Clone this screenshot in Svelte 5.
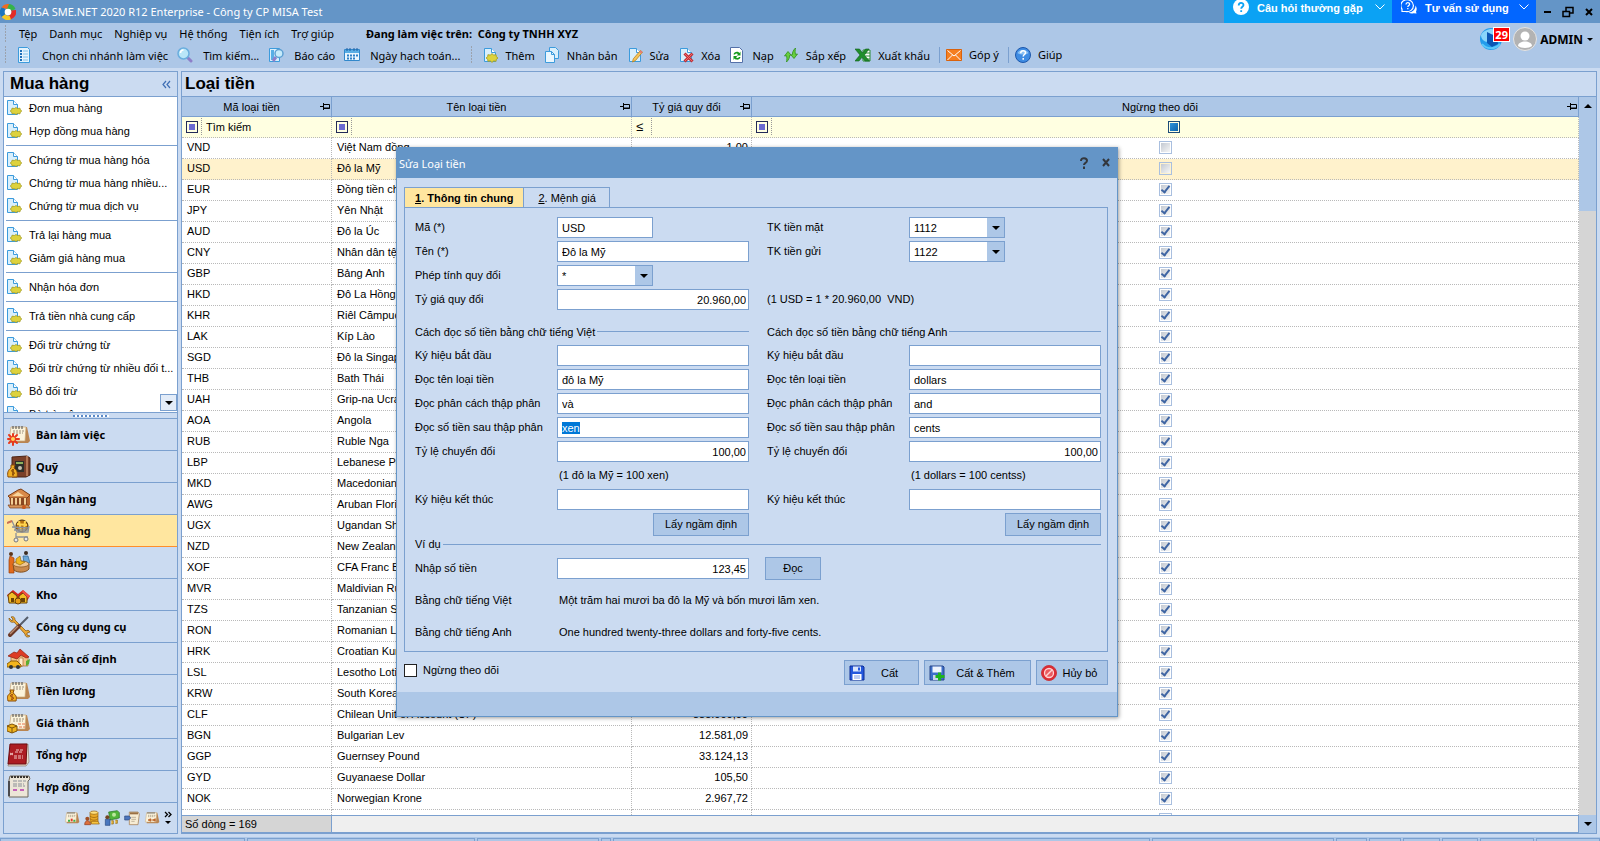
<script>
  import { onMount } from 'svelte';

  const menus = ['Tệp', 'Danh mục', 'Nghiệp vụ', 'Hệ thống', 'Tiện ích', 'Trợ giúp'];

  const mainTools = [
    { icon: 'branch', label: 'Chọn chi nhánh làm việc' },
    { icon: 'search', label: 'Tìm kiếm...' },
    { icon: 'report', label: 'Báo cáo' },
    { icon: 'calendar', label: 'Ngày hạch toán...' }
  ];

  const editTools = [
    { icon: 'add', label: 'Thêm' },
    { icon: 'copy', label: 'Nhân bản' },
    { icon: 'edit', label: 'Sửa' },
    { icon: 'delete', label: 'Xóa' },
    { icon: 'reload', label: 'Nạp' },
    { icon: 'sort', label: 'Sắp xếp' },
    { icon: 'excel', label: 'Xuất khẩu' },
    { icon: 'mail', label: 'Góp ý', sep: true },
    { icon: 'help', label: 'Giúp', sep: true }
  ];

  // Each inner list is a block closed by a separator line
  const tasks = [
    ['Đơn mua hàng', 'Hợp đồng mua hàng'],
    ['Chứng từ mua hàng hóa', 'Chứng từ mua hàng nhiều...', 'Chứng từ mua dịch vụ'],
    ['Trả lại hàng mua', 'Giảm giá hàng mua'],
    ['Nhận hóa đơn'],
    ['Trả tiền nhà cung cấp'],
    ['Đối trừ chứng từ', 'Đối trừ chứng từ nhiều đối t...', 'Bỏ đối trừ', 'Bù trừ công nợ']
  ];

  const modules = [
    { icon: 'desk', label: 'Bàn làm việc' },
    { icon: 'safe', label: 'Quỹ' },
    { icon: 'bank', label: 'Ngân hàng' },
    { icon: 'cart', label: 'Mua hàng' },
    { icon: 'sell', label: 'Bán hàng' },
    { icon: 'store', label: 'Kho' },
    { icon: 'tools', label: 'Công cụ dụng cụ' },
    { icon: 'house', label: 'Tài sản cố định' },
    { icon: 'salary', label: 'Tiền lương' },
    { icon: 'cost', label: 'Giá thành' },
    { icon: 'ledger', label: 'Tổng hợp' },
    { icon: 'contract', label: 'Hợp đồng' }
  ];
  let activeModule = $state('Mua hàng');

  let currencies = $state([
    { code: 'VND', name: 'Việt Nam đồng', rate: '1,00', stopped: false },
    { code: 'USD', name: 'Đô la Mỹ', stopped: false },
    { code: 'EUR', name: 'Đồng tiền chung', stopped: true },
    { code: 'JPY', name: 'Yên Nhật', stopped: true },
    { code: 'AUD', name: 'Đô la Úc', stopped: true },
    { code: 'CNY', name: 'Nhân dân tệ', stopped: true },
    { code: 'GBP', name: 'Bảng Anh', stopped: true },
    { code: 'HKD', name: 'Đô La Hồng Kông', stopped: true },
    { code: 'KHR', name: 'Riêl Cămpuchia', stopped: true },
    { code: 'LAK', name: 'Kíp Lào', stopped: true },
    { code: 'SGD', name: 'Đô la Singapore', stopped: true },
    { code: 'THB', name: 'Bath Thái', stopped: true },
    { code: 'UAH', name: 'Grip-na Ucraina', stopped: true },
    { code: 'AOA', name: 'Angola', stopped: true },
    { code: 'RUB', name: 'Ruble Nga', stopped: true },
    { code: 'LBP', name: 'Lebanese Pound', stopped: true },
    { code: 'MKD', name: 'Macedonian Denar', stopped: true },
    { code: 'AWG', name: 'Aruban Florin', stopped: true },
    { code: 'UGX', name: 'Ugandan Shilling', stopped: true },
    { code: 'NZD', name: 'New Zealand Dollar', stopped: true },
    { code: 'XOF', name: 'CFA Franc BCEAO', stopped: true },
    { code: 'MVR', name: 'Maldivian Rufiyaa', stopped: true },
    { code: 'TZS', name: 'Tanzanian Shilling', stopped: true },
    { code: 'RON', name: 'Romanian Leu', stopped: true },
    { code: 'HRK', name: 'Croatian Kuna', stopped: true },
    { code: 'LSL', name: 'Lesotho Loti', stopped: true },
    { code: 'KRW', name: 'South Korean Won', stopped: true },
    { code: 'CLF', name: 'Chilean Unit of Account (UF)', rate: '885.000,00', stopped: true },
    { code: 'BGN', name: 'Bulgarian Lev', rate: '12.581,09', stopped: true },
    { code: 'GGP', name: 'Guernsey Pound', rate: '33.124,13', stopped: true },
    { code: 'GYD', name: 'Guyanaese Dollar', rate: '105,50', stopped: true },
    { code: 'NOK', name: 'Norwegian Krone', rate: '2.967,72', stopped: true },
    { code: '', name: '', stopped: true }
  ]);
  let selected = $state('USD');

  let readings = $state([
    {
      id: 'vi', title: 'Cách đọc số tiền bằng chữ tiếng Việt', note: '(1 đô la Mỹ = 100 xen)',
      start: '', unit: 'đô la Mỹ', point: 'và', cents: 'xen', ratio: '100,00', end: ''
    },
    {
      id: 'en', title: 'Cách đọc số tiền bằng chữ tiếng Anh', note: '(1 dollars = 100 centss)',
      start: '', unit: 'dollars', point: 'and', cents: 'cents', ratio: '100,00', end: ''
    }
  ]);

  const readingFields = [
    { key: 'start', label: 'Ký hiệu bắt đầu' },
    { key: 'unit', label: 'Đọc tên loại tiền' },
    { key: 'point', label: 'Đọc phân cách thập phân' },
    { key: 'cents', label: 'Đọc số tiền sau thập phân' },
    { key: 'ratio', label: 'Tỷ lệ chuyển đổi', number: true },
    { key: 'end', label: 'Ký hiệu kết thúc' }
  ];

  onMount(() => {
    const field = document.getElementById('vi-cents');
    field.focus();
    field.select();
  });
</script>

{#snippet page()}
  <path d="M2.500 1.500h7l4 4v9h-11z" fill="#d9effc" stroke="#3c9bdc" />
  <path d="M9.500 1.500v4h4" fill="#fff" stroke="#3c9bdc" />
{/snippet}

{#snippet icon(name)}
  <svg class="icon" viewBox="0 0 16 16" aria-hidden="true">
    {#if name === 'branch'}
      <path d="M2.500 .5h9l2 2v13h-11z" fill="#e4f3fd" stroke="#3c9bdc" />
      <path d="M4 4h2M4 7h2M4 10h2M4 13h2" stroke="#1d6fb8" stroke-width="2" />
      <path d="M7 4h5M7 7h5M7 10h5M7 13h5" stroke="#7cc0ea" />
    {:else if name === 'search'}
      <path d="M10 10l4 4" stroke="#8d7fc9" stroke-width="3" stroke-linecap="round" />
      <circle cx="6.500" cy="6.500" r="5.500" fill="#b9e6f8" stroke="#6aaede" stroke-width="1.500" />
      <path d="M3.500 6a3 3 0 0 1 3-3" fill="none" stroke="#fff" stroke-width="1.500" />
    {:else if name === 'report'}
      <path d="M1.500 1.500h10v13h-10z" fill="#d9effc" stroke="#3c9bdc" />
      <path d="M3 3h3v10H3z" fill="#58aee5" />
      <path d="M8 10l-3 4" stroke="#8d7fc9" stroke-width="3" />
      <circle cx="11" cy="6.500" r="4" fill="#c6ebfa" stroke="#5d9fd2" stroke-width="1.500" />
    {:else if name === 'calendar'}
      <path d="M.5 2.500h15v11H.5z" fill="#e9f6fe" stroke="#3288cb" />
      <path d="M1 3h14v3H1z" fill="#58aee5" />
      <path d="M3 1v3M6 1v3M10 1v3M13 1v3" stroke="#1d5fa3" />
      <path d="M3 8.500h11M3 11.500h9" stroke="#2d80c7" stroke-width="2" stroke-dasharray="2 1" />
    {:else if name === 'add'}
      {@render page()}
      <path d="M10 6.500l1.500 1.600 2.600-.4.200 2 1.700 1.300-1.700 1.300-.200 2-2.600-.4L10 15.500l-1.500-1.600-2.600.4-.2-2L4 11l1.700-1.300.2-2 2.600.4z" fill="#ddd23c" stroke="#a39a1e" stroke-width=".8" />
    {:else if name === 'task'}
      <path d="M1.500 .5h6l4 4v10h-10z" fill="#d9effc" stroke="#3c9bdc" />
      <path d="M7.500 .5v4h4" fill="#fff" stroke="#3c9bdc" />
      <path d="M10 7.500l1.500 1 2.500-.3.300 1.600 1.500 1.200-1.500 1.200-.3 1.600-2.500-.3-1.500 1-1.500-1-2.500.3-.3-1.600L4.200 11l1.500-1.200.3-1.600 2.500.3z" fill="#ddd23c" stroke="#a39a1e" stroke-width=".8" />
    {:else if name === 'copy'}
      <path d="M5.500 .5h6l3 3v8h-9z" fill="#d9effc" stroke="#3c9bdc" />
      <path d="M1.500 4.500h6l3 3v8h-9z" fill="#e9f6fe" stroke="#3c9bdc" />
      <path d="M7.500 4.500v3h3" fill="none" stroke="#3c9bdc" />
    {:else if name === 'edit'}
      {@render page()}
      <path d="M13.500 3.500l2 1.600-7 8.400-3 1.500.800-3.200z" fill="#f7c557" stroke="#b9811f" stroke-width=".8" />
      <path d="M13.500 3.500l2 1.600-1.200 1.400-2-1.600z" fill="#e8767a" />
    {:else if name === 'delete'}
      {@render page()}
      <path d="M6.500 6.500l8 8M14.500 6.500l-8 8" stroke="#c22f35" stroke-width="3" />
      <path d="M7 7l7 7M14 7l-7 7" stroke="#ec6a6c" />
    {:else if name === 'reload'}
      <path d="M1.500 .5h9l3 3v12h-12z" fill="#fff" stroke="#5470a8" />
      <path d="M4.500 7.500c.5-3 4.500-3.500 6-1.500l1-1.500v4h-4l1.500-1.300c-1-1-2.500-.7-3 .3z" fill="#149a1c" />
      <path d="M11.500 10c-.5 3-4.500 3.500-6 1.500l-1 1.500V9h4L7 10.300c1 1 2.500.7 3-.3z" fill="#149a1c" />
    {:else if name === 'sort'}
      <path d="M1.500 9L5 4.500 8 8l-1.500.5c.2 2-.5 4-3 6.500.5-2.500.5-4.500 0-6.300z" fill="#67cf3e" stroke="#2e8f19" stroke-width=".8" />
      <path d="M14.500 7L11 11.500 8 8l1.500-.5c-.2-2 .5-4 3-6.500-.5 2.500-.5 4.500 0 6.300z" fill="#67cf3e" stroke="#2e8f19" stroke-width=".8" />
    {:else if name === 'excel'}
      <path d="M8 3h7v11H8z" fill="#fff" stroke="#2b8c35" />
      <path d="M9 6h6M9 9h6M9 12h6" stroke="#2b8c35" />
      <path d="M0 2h4.500l3 4 3-4H14L9.300 8.200 14.500 14H10l-3-3.700L4 14H0l5-6z" fill="#1f8f2c" stroke="#0f5c19" stroke-width=".6" />
    {:else if name === 'mail'}
      <path d="M.5 2.500h15v11H.5z" fill="#f57f20" stroke="#d9620d" />
      <path d="M1.500 3.500L8 9l6.500-5.500M1.500 13l5-5M14.500 13l-5-5" fill="none" stroke="#fff" />
    {:else if name === 'help'}
      <circle cx="8" cy="8" r="7.500" fill="#3f8ce3" stroke="#1c57ab" />
      <path d="M2.500 6a6 5 0 0 1 11 0c-3 2-8 2-11 0z" fill="#8cc2f5" />
      <path d="M5.700 6.200c0-3.400 4.800-3.200 4.800-.5 0 1.800-2.300 1.800-2.300 3.800M8.200 11v1.800" fill="none" stroke="#fff" stroke-width="1.500" />
    {:else if name === 'save'}
      <path d="M1 1h13l1 1v13H1z" fill="#2458dc" stroke="#0c2d96" />
      <path d="M4 1.500h8v5H4z" fill="#dbe6fb" />
      <path d="M9 2.500h2v3H9z" fill="#2458dc" />
      <path d="M3.500 9h9v6h-9z" fill="#fff" />
      <path d="M5 11h6M5 13h6" stroke="#7d9be6" />
    {:else if name === 'saveadd'}
      <path d="M1 1h13l1 1v13H1z" fill="#3c6fc9" stroke="#29478a" />
      <path d="M3.500 1.500h9v6h-9z" fill="#eef4fd" />
      <path d="M4 10h8v5H4z" fill="#c9d5ea" />
      <path d="M10.500 7.500v8M6.500 11.500h9" stroke="#1eb31e" stroke-width="3" />
    {:else if name === 'cancel'}
      <circle cx="8" cy="8" r="7.500" fill="#dc2a32" stroke="#c93a40" />
      <circle cx="8" cy="8" r="4.500" fill="#ea5a5f" stroke="#ffd4d4" stroke-width="1.300" />
      <path d="M5 11l6-6" stroke="#ffd4d4" stroke-width="1.500" />
    {/if}
  </svg>
{/snippet}

{#snippet board()}
  <path d="M5 4h15l3 14-2 2H4z" fill="#b98552" />
  <path d="M4 4h15l-1 14H2z" fill="#fbf3dc" stroke="#c9a877" stroke-width=".7" />
  <path d="M6 3v3M9 3v3M12 3v3M15 3v3" stroke="#444" />
  <path d="M6 8h11M6 10h10" stroke="#9a8d78" stroke-dasharray="2 1" />
{/snippet}

{#snippet moduleIcon(name)}
  <svg class="module-icon" viewBox="0 0 24 24" aria-hidden="true">
    {#if name === 'desk'}
      {@render board()}
      <path d="M6 11v11M1 16h11M2 12l8 8M10 12l-8 8" stroke="#e8391c" stroke-width="2" stroke-linecap="round" />
      <circle cx="6" cy="16" r="2" fill="#ffd45c" />
    {:else if name === 'safe'}
      <path d="M5 2l15-1 3 2v17l-4 2H5z" fill="#7b4029" stroke="#4c2415" />
      <path d="M20 1v20" stroke="#b47754" stroke-width="2" />
      <path d="M8 6h9v11H8z" fill="#2d2f2a" />
      <path d="M9 8h7" stroke="#8db05d" stroke-width="2" />
      <circle cx="13" cy="13" r="2" fill="#c7c1b0" />
      <path d="M4 10h4l-1 3c3 2 4 5 3 9H1c-1-4 0-7 3-9z" fill="#f0ae25" stroke="#8a4c0b" />
      <path d="M7 15c-3-1-3 2-1 2s2 3-1 2M6 14v7" fill="none" stroke="#7a3c05" />
    {:else if name === 'bank'}
      <path d="M2 9L13 2l10 6v10l-6 4L3 17z" fill="#b5642f" />
      <path d="M1 9L11 3l3-1 9 6-3 3H3z" fill="#d98a4a" stroke="#7d3f17" />
      <path d="M5 9l6-4 6 4z" fill="#f8d59c" />
      <path d="M3 11h17v8H3z" fill="#8a4721" />
      <path d="M5 11v8M9 11v8M13 11v8M18 11v8" stroke="#f3cf95" stroke-width="2" />
      <path d="M1 18h20l2 3H3z" fill="#d9955a" stroke="#7d3f17" stroke-width=".7" />
      <circle cx="17" cy="20" r="2" fill="#c95b1f" />
    {:else if name === 'cart'}
      <circle cx="15" cy="7" r="6" fill="#b87312" stroke="#4c3210" />
      <path d="M10 5l10 1M12 2l2 10M18 2l-1 10" stroke="#ffd44e" stroke-width="2" />
      <path d="M0 4l5-2 5 11h11l1-6M5 8l17 1M7 11h14M9 14v4h12M12 9v4M17 9v4" fill="none" stroke="#8d929b" stroke-width="1.300" />
      <path d="M0 4l5-2" stroke="#cb6f53" stroke-width="2" />
      <circle cx="9" cy="21" r="2" fill="#e8e8ea" stroke="#777" />
      <circle cx="19" cy="20" r="2" fill="#e8e8ea" stroke="#777" />
    {:else if name === 'sell'}
      <circle cx="4" cy="3" r="2" fill="#5d3518" />
      <path d="M3 5l4 2v15H2V9z" fill="#e26b1c" stroke="#9a3f0c" stroke-width=".7" />
      <circle cx="19" cy="2" r="2" fill="#3c2c22" />
      <path d="M16 5l5 0 2 7h-6z" fill="#6aa6d8" stroke="#2f638f" stroke-width=".7" />
      <path d="M6 13h16v5c-3 4-12 4-15 1z" fill="#c98a4d" stroke="#82501f" />
      <ellipse cx="14" cy="13" rx="8" ry="3" fill="#efc793" stroke="#82501f" stroke-width=".7" />
      <path d="M9 8l4-3 1 5 4 1-5 3-4-2z" fill="#f0b71c" stroke="#8c6208" stroke-width=".6" />
    {:else if name === 'store'}
      <path d="M0 12l6-5 5 4 5-4 7 6-3 5H3z" fill="#d2261c" />
      <path d="M1 12l4-3 5 4v7H2zM12 13l4-3 4 4v6h-8z" fill="#f3bd27" stroke="#6b4307" />
      <path d="M16 7l7 6-2 2-6-6z" fill="#ee5148" />
      <path d="M4 15h3v4H4zM14 15h4v4h-4z" fill="#6b4307" />
      <circle cx="11" cy="18" r="3" fill="#e79c16" stroke="#6b4307" />
    {:else if name === 'tools'}
      <path d="M2 3c0 4 3 5 5 4l11 12c0 3 3 4 5 2l-3-1v-2l3-1c-1-2-3-2-4-1L8 5c0-3-2-4-4-3l2 2-1 2z" fill="#eba631" stroke="#7d5210" stroke-width=".7" />
      <path d="M21 2l-9 9" stroke="#555d6b" stroke-width="2" />
      <path d="M12 11l-9 9" stroke="#6b3827" stroke-width="4" stroke-linecap="round" />
      <path d="M11 11l-8 8" stroke="#b98c72" stroke-width="1.500" />
    {:else if name === 'house'}
      <path d="M4 9h17v10H4z" fill="#f2c289" stroke="#ac6a32" stroke-width=".7" />
      <path d="M1 9l6-4 3 1 3-4 9 8-3 1-5-3-4 4z" fill="#dd3b24" stroke="#8f1f10" stroke-width=".7" />
      <path d="M12 11h4v8h-4z" fill="#fff0cf" stroke="#ac6a32" stroke-width=".7" />
      <path d="M0 17l4-3h6l4 4v2H0z" fill="#f3b51e" stroke="#8c5e08" />
      <circle cx="4" cy="20" r="2" fill="#333" /><circle cx="11" cy="20" r="2" fill="#333" />
      <path d="M19 14l4-2-1 5-3 2z" fill="#5aae32" />
    {:else if name === 'salary'}
      {@render board()}
      <path d="M3 11h4l-1 3c3 2 4 4 3 8H1c-1-4-1-6 3-8z" fill="#f0ae25" stroke="#8a4c0b" />
      <path d="M6 16c-3-1-3 2-1 2s2 3-1 2" fill="none" stroke="#7a1c05" />
    {:else if name === 'cost'}
      {@render board()}
      <path d="M11 13h7M12 16h6" stroke="#e8744f" stroke-dasharray="3 1" />
      <path d="M0 15l5-2 5 2v5l-5 2-5-2z" fill="#f0b31d" stroke="#80540a" />
      <path d="M0 15l5 2 5-2M5 17v5" fill="none" stroke="#80540a" />
    {:else if name === 'ledger'}
      <path d="M4 2l17-1 1 18-3 4H1z" fill="#e8ddcb" stroke="#8b7a6d" stroke-width=".7" />
      <path d="M3 1h17l-1 20H1z" fill="#ac1c22" stroke="#6d0d12" />
      <path d="M9 7h8M8 9h8M7 13h9M7 15h9" stroke="#f1c9c4" stroke-dasharray="3 1" />
      <path d="M3 10l3 2M6 10l-3 2" stroke="#f1c9c4" />
    {:else if name === 'contract'}
      <path d="M3 1h19l1 3-2 2v16H2V5z" fill="#ece5d7" stroke="#6f665a" />
      <path d="M4 2h17" stroke="#39342e" stroke-width="2" stroke-dasharray="2 1" />
      <path d="M6 6h13M6 9h11M6 11h12" stroke="#8b9098" stroke-dasharray="4 1" />
      <path d="M6 15h4M13 15h4" stroke="#c45fb8" stroke-width="2" />
      <path d="M2 6v15" stroke="#4b4a4e" stroke-width="2" />
    {:else if name === 'chart'}
      {@render board()}
      <path d="M6 16h3M14 16h3" stroke="#3bb14a" stroke-width="3" />
      <path d="M10 15h3" stroke="#e03a2e" stroke-width="4" />
    {:else if name === 'coins'}
      <path d="M9 4v14c3 3 9 3 12 0V4z" fill="#e9a928" stroke="#935f0c" />
      <ellipse cx="15" cy="4" rx="6" ry="2.500" fill="#ffe07d" stroke="#935f0c" />
      <path d="M9 9c3 3 9 3 12 0M9 13c3 3 9 3 12 0" fill="none" stroke="#935f0c" />
      <circle cx="5" cy="13" r="3" fill="#a24f25" />
      <path d="M1 22c0-8 8-8 9 0z" fill="#dd6f3d" stroke="#8c3718" />
      <path d="M11 17h10l2 4H11z" fill="#f6c441" stroke="#935f0c" />
    {:else if name === 'money'}
      <path d="M7 3l13-2 3 3v8l-14 3z" fill="#52b43a" stroke="#1f701a" />
      <circle cx="15" cy="7" r="3" fill="#bbe89d" />
      <circle cx="5" cy="11" r="3" fill="#744522" />
      <path d="M2 14h7v9H2z" fill="#4977be" stroke="#294a80" />
      <path d="M11 16h3v5h-3M17 15h3v5h-3" fill="#e9b63a" stroke="#8a6310" />
    {:else if name === 'form'}
      <path d="M8 3h13l2 3-2 16H8z" fill="#f7ecd4" stroke="#9a6f42" />
      <path d="M9 5h12" stroke="#9a6f42" stroke-width="3" />
      <path d="M11 11h7M11 14h7M11 17h5" stroke="#a79980" />
      <path d="M1 9h7l2 3-3 3H1z" fill="#4c75bd" stroke="#2d477a" />
    {:else if name === 'budget'}
      {@render board()}
      <path d="M6 15l4-2v4zM17 13v4l-4-2zM9 15h5" fill="#b85c20" stroke="#b85c20" />
    {/if}
  </svg>
{/snippet}

{#snippet pin()}
  <svg class="pin" viewBox="0 0 10 9" aria-hidden="true">
    <path d="M0 4.500h4M3.500 1v7M4 2.500h5.500v4H4" fill="none" stroke="#000" />
    <path d="M4 6h6" stroke="#000" />
  </svg>
{/snippet}

<div class="app">
  <header class="titlebar">
    <svg class="logo" viewBox="0 0 16 16" aria-hidden="true">
      <path d="M8 0a8 8 0 0 1 7.500 5L11 7a3.500 3.500 0 0 0-5-1.500z" fill="#35b34a" />
      <path d="M16 6a8 8 0 0 1-6 9.700L8.500 11.400A3.500 3.500 0 0 0 11 6.500z" fill="#e22d27" />
      <path d="M11 15.500A8 8 0 0 1 1 12l4-2.500a3.500 3.500 0 0 0 4.500 2z" fill="#f5c927" />
      <path d="M1.500 13A8 8 0 0 1 2 3l4 2.500A3.500 3.500 0 0 0 5.500 10z" fill="#1c74bf" />
      <path d="M1.500 3.500A8 8 0 0 1 9 0L7 5z" fill="#f06a22" />
      <circle cx="8" cy="8" r="3.300" fill="#fff" />
    </svg>
    <span class="app-name">MISA SME.NET 2020 R12 Enterprise - Công ty CP MISA Test</span>
    <button class="support faq">
      <svg class="support-icon" viewBox="0 0 16 16" aria-hidden="true">
        <circle cx="8" cy="7" r="8" fill="#fff" />
        <path d="M5.700 5.500c0-3.400 4.800-3.200 4.800-.5 0 1.800-2.300 1.800-2.300 3.800M8.200 10.200V12" fill="none" stroke="#0ba2f4" stroke-width="1.800" />
      </svg>
      <span>Câu hỏi thường gặp</span>
      <svg class="chevron" viewBox="0 0 10 6" aria-hidden="true"><path d="M.5 .5L5 5l4.500-4.500" fill="none" stroke="#fff" /></svg>
    </button>
    <button class="support advice">
      <svg class="support-icon" viewBox="0 0 16 16" aria-hidden="true">
        <path d="M1 11.500V9.200A6.300 6 0 1 1 4.500 11.500z" fill="none" stroke="#fff" stroke-width="1.200" />
        <path d="M5 4.500c0-2.600 3.600-2.400 3.600-.3 0 1.400-1.800 1.400-1.800 2.800M6.800 8v1.300" fill="none" stroke="#fff" stroke-width="1.300" />
        <path d="M14.500 5.500c2 3 1 5 .5 6l.5 2-3-.3c-1.500.5-3.500.3-5-.7 4 0 7-3 7-7z" fill="#fff" />
      </svg>
      <span>Tư vấn sử dụng</span>
      <svg class="chevron" viewBox="0 0 10 6" aria-hidden="true"><path d="M.5 .5L5 5l4.500-4.500" fill="none" stroke="#fff" /></svg>
    </button>
    <div class="window-buttons">
      <button aria-label="Thu nhỏ"><svg viewBox="0 0 12 12"><path d="M3 6h7" stroke="#000" stroke-width="2" /></svg></button>
      <button aria-label="Khôi phục"><svg viewBox="0 0 12 12"><path d="M4 5V1.500h7V7H8M1 5.500h6.500v5H1z" fill="none" stroke="#000" stroke-width="1.500" /></svg></button>
      <button aria-label="Đóng"><svg viewBox="0 0 12 12"><path d="M3 3l6 6M9 3L3 9" stroke="#000" stroke-width="2" /></svg></button>
    </div>
  </header>

  <div class="commands">
    <div class="bars">
      <nav class="menubar">
        <span class="grip"></span>
        {#each menus as menu}
          <button>{menu}</button>
        {/each}
        <strong>Đang làm việc trên:&nbsp; Công ty TNHH XYZ</strong>
      </nav>
      <div class="toolbar">
        <span class="grip"></span>
        {#each mainTools as tool}
          <button class="main">{@render icon(tool.icon)}{tool.label}</button>
        {/each}
        <span class="grip"></span>
        {#each editTools as tool}
          <button class:sep={tool.sep}>{@render icon(tool.icon)}{tool.label}</button>
        {/each}
      </div>
    </div>
    <div class="account">
      <span class="notice">
        <svg viewBox="0 0 24 24" aria-hidden="true">
          <circle cx="12" cy="12" r="11" fill="#239cec" />
          <path d="M2 8c3-6 14-9 19-2-6 0-12 2-12 9-4 0-7-3-7-7z" fill="#8ad6fb" />
          <path d="M8 5l10 5 1 7-6 3-5-4z" fill="#0c57b5" />
          <path d="M3 17c4 5 13 6 18 0" fill="none" stroke="#5cc8fa" stroke-width="2" />
        </svg>
        <span class="badge">29</span>
      </span>
      <svg class="avatar" viewBox="0 0 24 24" aria-hidden="true">
        <circle cx="12" cy="12" r="11.500" fill="#b3b3b3" stroke="#e4e4e4" />
        <circle cx="12" cy="9" r="4.500" fill="#fff" />
        <path d="M5 19c0-6 14-6 14 0-3 2.500-11 2.500-14 0z" fill="#fff" />
      </svg>
      <button class="user">ADMIN <span class="down"></span></button>
    </div>
  </div>

  <div class="workspace">
    <aside class="sidebar">
      <h2>Mua hàng
        <svg viewBox="0 0 9 9" aria-hidden="true"><path d="M4 1L1 4.500 4 8M8 1L5 4.500 8 8" fill="none" stroke="#3f6fb5" stroke-width="1.200" /></svg>
      </h2>
      <div class="tasks">
        {#each tasks as group}
          <ul>
            {#each group as task}
              <li><a href="#task">{@render icon('task')}{task}</a></li>
            {/each}
          </ul>
        {/each}
        <button class="scroll-down" aria-label="Xem thêm"><span class="down"></span></button>
      </div>
      <div class="splitter"></div>
      <nav class="modules">
        {#each modules as module}
          <button class:active={activeModule === module.label} onclick={() => (activeModule = module.label)}>
            {@render moduleIcon(module.icon)}{module.label}
          </button>
        {/each}
      </nav>
      <div class="shortcuts">
        {#each ['chart', 'coins', 'money', 'form', 'budget'] as name}
          {@render moduleIcon(name)}
        {/each}
        <svg class="more" viewBox="0 0 8 14" aria-hidden="true">
          <path d="M1 1l2.500 2.500L1 6M4.500 1L7 3.500 4.500 6" fill="none" stroke="#000" stroke-width="1.300" />
          <path d="M1 10h6l-3 3z" />
        </svg>
      </div>
    </aside>

    <main class="content">
      <h1>Loại tiền</h1>
      <div class="grid-area">
        <div class="grid">
          <div class="rows">
            <table>
              <colgroup>
                <col class="c-code" /><col class="c-name" /><col class="c-rate" /><col />
              </colgroup>
              <thead>
                <tr>
                  {#each ['Mã loại tiền', 'Tên loại tiền', 'Tỷ giá quy đổi', 'Ngừng theo dõi'] as title}
                    <th><span>{title}</span>{@render pin()}</th>
                  {/each}
                </tr>
                <tr class="filter">
                  <td>
                    <div><span class="op"><i></i></span><input aria-label="Lọc mã" placeholder="Tìm kiếm" /></div>
                  </td>
                  <td>
                    <div><span class="op"><i></i></span><input aria-label="Lọc tên" /></div>
                  </td>
                  <td>
                    <div><span class="op">≤</span><input aria-label="Lọc tỷ giá" /></div>
                  </td>
                  <td>
                    <div><span class="op"><i></i></span><input class="tri" type="checkbox" aria-label="Lọc ngừng theo dõi" /></div>
                  </td>
                </tr>
              </thead>
              <tbody>
                {#each currencies as item}
                  <tr class:selected={item.code === selected} onclick={() => (selected = item.code)}>
                    <td>{item.code}</td>
                    <td>{item.name}</td>
                    <td class="number">{item.rate ?? ''}</td>
                    <td class="check"><input type="checkbox" bind:checked={item.stopped} aria-label="Ngừng theo dõi {item.code}" /></td>
                  </tr>
                {/each}
              </tbody>
            </table>
          </div>
          <footer><span>Số dòng = 169</span></footer>
        </div>
        <div class="scrollbar">
          <button aria-label="Cuộn lên"><span class="up"></span></button>
          <div class="thumb"></div>
          <div class="track"></div>
          <button aria-label="Cuộn xuống"><span class="down"></span></button>
        </div>
      </div>
    </main>
  </div>

  <div class="statusbar">
    <span></span><span></span><span></span><span></span><span></span><span></span>
    <span></span><span></span><span></span><span></span><span></span><span></span>
  </div>

  <div class="dialog" role="dialog" aria-labelledby="dialog-title">
    <div class="dialog-title">
      <span id="dialog-title">Sửa Loại tiền</span>
      <button aria-label="Trợ giúp"><svg viewBox="0 0 12 12"><path d="M3 4c0-4 6-3.500 6-.3C9 6 6 5.800 6 8M6 9.500V12" fill="none" stroke="#33373d" stroke-width="2" /></svg></button>
      <button aria-label="Đóng"><svg viewBox="0 0 12 12"><path d="M3 2l6 7M9 2L3 9" stroke="#33373d" stroke-width="2" /></svg></button>
    </div>

    <form class="dialog-body" onsubmit={(e) => e.preventDefault()}>
      <div class="tabs" role="tablist">
        <button type="button" role="tab" aria-selected="true" class="active"><u>1</u>. Thông tin chung</button>
        <button type="button" role="tab" aria-selected="false"><u>2</u>. Mệnh giá</button>
      </div>

      <div class="panel">
        <div class="columns">
          <div class="fields">
            <label for="code">Mã (*)</label>
            <input id="code" class="short" value="USD" />
            <label for="name">Tên (*)</label>
            <input id="name" value="Đô la Mỹ" />
            <label for="operator">Phép tính quy đổi</label>
            <div class="combo"><select id="operator"><option>*</option></select><span class="arrow"><span class="down"></span></span></div>
            <label for="rate">Tỷ giá quy đổi</label>
            <input id="rate" class="number" value="20.960,00" />
          </div>
          <div class="fields">
            <label for="cash">TK tiền mặt</label>
            <div class="combo"><select id="cash"><option>1112</option></select><span class="arrow"><span class="down"></span></span></div>
            <label for="deposit">TK tiền gửi</label>
            <div class="combo"><select id="deposit"><option>1122</option></select><span class="arrow"><span class="down"></span></span></div>
            <span class="blank"></span>
            <span class="wide">(1 USD = 1 * 20.960,00&nbsp; VND)</span>
          </div>
        </div>

        <div class="columns reading">
          {#each readings as reading}
            <div class="fields">
              <div class="legend">{reading.title}</div>
              {#each readingFields as field}
                <label for="{reading.id}-{field.key}">{field.label}</label>
                <input id="{reading.id}-{field.key}" class:number={field.number} bind:value={reading[field.key]} />
                {#if field.number}
                  <span class="note">{reading.note}</span>
                {/if}
              {/each}
              <button type="button" class="default">Lấy ngầm định</button>
            </div>
          {/each}
        </div>

        <div class="fields example">
          <div class="legend">Ví dụ</div>
          <label for="amount">Nhập số tiền</label>
          <input id="amount" class="number" value="123,45" />
          <button type="button" class="read">Đọc</button>
        </div>
        <dl>
          <dt>Bằng chữ tiếng Việt</dt>
          <dd>Một trăm hai mươi ba đô la Mỹ và bốn mươi lăm xen.</dd>
          <dt>Bằng chữ tiếng Anh</dt>
          <dd>One hundred twenty-three dollars and forty-five cents.</dd>
        </dl>
      </div>

      <div class="actions">
        <label class="stop"><input type="checkbox" /> Ngừng theo dõi</label>
        <button class="save">{@render icon('save')}<span>Cất</span></button>
        <button type="button" class="save-add">{@render icon('saveadd')}<span>Cất &amp; Thêm</span></button>
        <button type="button" class="cancel">{@render icon('cancel')}<span>Hủy bỏ</span></button>
      </div>
    </form>
    <div class="dialog-foot"></div>
  </div>
</div>

<style>
  :global(body) {
    overflow: hidden;
  }
  .app {
    --title: #6495c7;
    --bar: #adc7e7;
    --light: #cbdbf1;
    --line: #7ba0cf;
    position: relative;
    display: flex;
    flex-direction: column;
    height: 100vh;
    background: var(--light);
    color: #000;
    font-family: "Liberation Sans", Arial, sans-serif;
    font-size: 11px;
  }
  .app *, .app *::before, .app *::after {
    box-sizing: border-box;
  }
  button {
    padding: 0;
    border: 0;
    background: none;
    color: inherit;
    font: inherit;
    white-space: nowrap;
  }
  input, select {
    margin: 0;
    color: inherit;
    font: inherit;
  }
  .icon {
    width: 16px;
    height: 16px;
    flex: none;
  }
  .down, .up {
    width: 0;
    height: 0;
    border: 4px solid transparent;
    border-bottom-width: 0;
    border-top-color: #000;
  }
  .up {
    border-width: 0 4px 4px;
    border-bottom-color: #000;
  }

  /* Title bar */
  .titlebar {
    display: flex;
    align-items: center;
    height: 23px;
    flex: none;
    background: var(--title);
    color: #fff;
    font-family: "Noto Sans", "Open Sans", sans-serif;
  }
  .logo {
    width: 16px;
    height: 16px;
  }
  .app-name {
    flex: 1;
    padding-left: 6px;
  }
  .support {
    display: flex;
    align-items: flex-start;
    gap: 8px;
    height: 23px;
    padding: 0 7px 0 9px;
    font-family: "Liberation Sans", Arial, sans-serif;
    font-weight: bold;
    line-height: 16px;
  }
  .support span {
    flex: 1;
    text-align: left;
  }
  .faq {
    width: 168px;
    background: #0ba2f4;
  }
  .advice {
    width: 144px;
    background: #0266ff;
  }
  .support-icon {
    width: 16px;
    height: 16px;
  }
  .chevron {
    width: 10px;
    height: 6px;
    margin-top: 4px;
  }
  .window-buttons {
    display: flex;
    justify-content: space-between;
    width: 64px;
    padding: 0 5px;
  }
  .window-buttons svg {
    display: block;
    width: 12px;
    height: 12px;
  }

  /* Menu and toolbar */
  .commands {
    display: flex;
    justify-content: space-between;
    height: 45px;
    flex: none;
    background: var(--bar);
    font-family: "Noto Sans", "Open Sans", sans-serif;
  }
  .menubar, .toolbar {
    display: flex;
    align-items: center;
    height: 21px;
    padding-left: 3px;
  }
  .menubar {
    gap: 12px;
  }
  .menubar strong {
    margin-left: 20px;
  }
  .toolbar {
    gap: 9px;
    height: 22px;
  }
  .toolbar button {
    display: flex;
    align-items: center;
    gap: 7px;
  }
  .toolbar .main {
    gap: 10px;
  }
  .toolbar .sep {
    padding-left: 6px;
    border-left: 1px solid var(--line);
    line-height: 14px;
  }
  .grip {
    width: 4px;
    height: 18px;
    background: conic-gradient(from 90deg at 2px 2px, transparent 75%, #9ba2ad 0) 0 0 / 3px 3px;
  }
  .account {
    display: flex;
    align-items: flex-start;
    gap: 3px;
    padding: 4px 7px 0 0;
  }
  .notice {
    position: relative;
    width: 31px;
    height: 24px;
  }
  .notice svg, .avatar {
    width: 24px;
    height: 24px;
  }
  .badge {
    position: absolute;
    top: 0;
    right: 0;
    width: 17px;
    border: 1px solid #fff;
    background: #f00;
    color: #fff;
    font-weight: bold;
    line-height: 13px;
    text-align: center;
  }
  .user {
    display: flex;
    align-items: center;
    gap: 4px;
    height: 24px;
    font-size: 12px;
    font-weight: bold;
  }
  .user .down {
    border-width: 3px 3px 0;
  }

  /* Workspace */
  .workspace {
    display: flex;
    gap: 3px;
    flex: 1;
    min-height: 0;
    padding: 3px;
  }
  .sidebar {
    display: flex;
    flex-direction: column;
    width: 175px;
    flex: none;
    border: 1px solid var(--line);
  }
  h1, h2 {
    height: 25px;
    margin: 0;
    padding: 0 6px;
    flex: none;
    border-bottom: 1px solid var(--line);
    font-size: 17px;
    line-height: 24px;
  }
  h1 {
    padding: 0 3px;
  }
  h2 {
    display: flex;
    align-items: center;
    justify-content: space-between;
  }
  h2 svg {
    width: 9px;
    height: 9px;
  }
  .tasks {
    position: relative;
    flex: 1;
    min-height: 0;
    overflow: hidden;
    background: #fff;
  }
  ul {
    margin: 0 0 0 2px;
    padding: 0 0 2px;
    list-style: none;
  }
  ul + ul {
    padding-top: 3px;
    border-top: 1px solid var(--line);
  }
  li a {
    display: flex;
    align-items: center;
    gap: 7px;
    height: 23px;
    padding-bottom: 2px;
    color: #000;
    text-decoration: none;
    white-space: nowrap;
  }
  .scroll-down {
    position: absolute;
    right: 0;
    bottom: 1px;
    display: flex;
    align-items: center;
    justify-content: center;
    width: 17px;
    height: 17px;
    border: 1px solid var(--line);
    background: #e3ecf8;
  }
  .splitter {
    height: 7px;
    flex: none;
    border: solid var(--line);
    border-width: 1px 0;
    background: repeating-linear-gradient(90deg, #5a8ac8 0 2px, #fff 2px 4px) center / 36px 2px no-repeat;
  }
  .modules button {
    display: flex;
    align-items: center;
    gap: 5px;
    width: 100%;
    height: 32px;
    padding-left: 3px;
    border-bottom: 1px solid var(--line);
    font-family: "Noto Sans", "Open Sans", sans-serif;
    font-weight: bold;
  }
  .modules .active {
    border-bottom-color: #ff8e2b;
    background: #ffe69f;
  }
  .module-icon {
    width: 24px;
    height: 24px;
    flex: none;
  }
  .shortcuts {
    display: flex;
    align-items: center;
    justify-content: flex-end;
    gap: 4px;
    height: 30px;
    padding-right: 5px;
    flex: none;
  }
  .shortcuts .module-icon {
    width: 16px;
    height: 16px;
  }
  .more {
    width: 8px;
    height: 14px;
  }

  /* Currency grid */
  .content {
    display: flex;
    flex-direction: column;
    flex: 1;
    min-width: 0;
    border: 1px solid var(--line);
  }
  .grid-area {
    display: flex;
    flex: 1;
    min-height: 0;
  }
  .grid {
    display: flex;
    flex-direction: column;
    flex: 1;
    min-width: 0;
  }
  .rows {
    flex: 1;
    min-height: 0;
    overflow: hidden;
    background: #fff;
  }
  table {
    width: 100%;
    border-spacing: 0;
    table-layout: fixed;
  }
  .c-code {
    width: 150px;
  }
  .c-name {
    width: 300px;
  }
  .c-rate {
    width: 120px;
  }
  th {
    position: relative;
    height: 20px;
    padding: 0 10px 0 0;
    border: solid var(--line);
    border-width: 0 1px 1px 0;
    background: var(--bar);
    font-weight: normal;
  }
  .pin {
    position: absolute;
    top: 5px;
    right: 1px;
    width: 10px;
    height: 9px;
  }
  td {
    height: 21px;
    padding: 0 5px 2px;
    overflow: hidden;
    border: dotted #b9b9b9;
    border-width: 0 1px 1px 0;
    line-height: 14px;
    white-space: nowrap;
  }
  td.number {
    padding-right: 3px;
    text-align: right;
  }
  td.check {
    padding: 0 0 1px;
    line-height: 0;
    text-align: center;
  }
  tbody tr.selected {
    background: #fff2cc;
  }
  .check input {
    position: relative;
    width: 13px;
    height: 13px;
    border: 1px solid #a9bfdf;
    background: linear-gradient(135deg, #c3c9d2, #f6f6f6) content-box;
    padding: 1px;
    appearance: none;
    vertical-align: middle;
  }
  .check input:checked::after {
    content: "";
    position: absolute;
    top: 0;
    left: 3px;
    width: 5px;
    height: 9px;
    border: solid #3f65a3;
    border-width: 0 2px 2px 0;
    transform: rotate(38deg);
  }
  .filter td {
    height: 21px;
    padding: 0;
    background: #ffffe1;
  }
  .filter div {
    display: flex;
    align-items: center;
    height: 20px;
    padding: 0 3px 1px 4px;
  }
  .op {
    display: flex;
    align-items: center;
    width: 16px;
    height: 17px;
    flex: none;
    border-right: 1px dotted #999;
    font-size: 13px;
  }
  .op i {
    width: 12px;
    height: 12px;
    border: 1px solid #222a58;
    background: #6b6bd0 content-box;
    padding: 2px;
  }
  .filter input {
    width: 100%;
    min-width: 0;
    padding: 0 4px;
    border: 0;
    background: none;
  }
  .filter input::placeholder {
    color: #000;
    opacity: 1;
  }
  .filter .tri {
    width: 12px;
    height: 12px;
    margin: 0 auto;
    border: 1px solid #1d4c78;
    background: linear-gradient(135deg, #2e92d8, #0b64ad) content-box;
    padding: 1px;
    appearance: none;
  }
  footer {
    height: 18px;
    flex: none;
    border: 1px solid var(--line);
    border-left: 0;
    background: #efefef;
    line-height: 16px;
  }
  footer span {
    display: block;
    width: 150px;
    padding-left: 3px;
    border-right: 1px solid var(--line);
    background: #d5d5d5;
  }
  .scrollbar {
    display: flex;
    flex-direction: column;
    width: 17px;
    background: var(--bar);
  }
  .scrollbar button {
    display: flex;
    align-items: center;
    justify-content: center;
    height: 18px;
  }
  .thumb {
    height: 96px;
  }
  .track {
    flex: 1;
    background: #d5d5d5;
  }

  /* Status bar, only its top edge shows */
  .statusbar {
    display: grid;
    grid-template-columns: 245px 228px 122px 10px minmax(0, 1fr) 182px 31px 32px 37px 36px 54px 64px;
    gap: 2px;
    height: 4px;
    padding-top: 1px;
    flex: none;
    background: var(--bar);
  }
  .statusbar span {
    border: 1px solid var(--line);
    border-bottom: 0;
  }

  /* Dialog */
  .dialog {
    position: absolute;
    top: 147px;
    left: 396px;
    width: 722px;
    border: 1px solid var(--title);
    background: var(--light);
    box-shadow: 1px 1px 4px rgba(0, 0, 0, 0.4);
  }
  .dialog-title {
    display: flex;
    align-items: center;
    gap: 10px;
    height: 30px;
    padding: 0 5px 0 2px;
    background: var(--title);
    color: #fff;
    font-family: "Noto Sans", "Open Sans", sans-serif;
  }
  .dialog-title span {
    flex: 1;
  }
  .dialog-title svg {
    display: block;
    width: 12px;
    height: 12px;
  }
  .dialog-body {
    padding: 9px 9px 0 7px;
  }
  .tabs {
    display: flex;
  }
  .tabs button {
    height: 20px;
    padding: 0 13px 0 14px;
    border: 1px solid var(--line);
    border-bottom: 0;
    border-left-width: 0;
    line-height: 20px;
  }
  .tabs .active {
    padding: 0 10px;
    border-left-width: 1px;
    background: #ffe69f;
    font-weight: bold;
  }
  .panel {
    padding: 9px 6px 8px 10px;
    border: 1px solid var(--line);
    line-height: 21px;
  }
  .columns {
    display: grid;
    grid-template-columns: 1fr 1fr;
    gap: 18px;
  }
  .fields {
    display: grid;
    grid-template-columns: 142px 192px;
    grid-auto-rows: 21px;
    gap: 3px 0;
  }
  .fields input, .fields select {
    width: 100%;
    height: 21px;
    padding: 0 4px;
    border: 1px solid var(--line);
    border-radius: 0;
    outline: 0;
    background: #fff;
    line-height: 14px;
    appearance: none;
  }
  .fields input.short, .combo {
    width: 96px;
  }
  .fields input.number {
    padding: 0 2px;
    text-align: right;
  }
  .fields input::selection {
    background: #0078d7;
    color: #fff;
  }
  .combo {
    position: relative;
  }
  .arrow {
    position: absolute;
    top: 1px;
    right: 1px;
    display: flex;
    align-items: center;
    justify-content: center;
    width: 17px;
    height: 19px;
    background: var(--bar);
    pointer-events: none;
  }
  .blank, .wide, .legend {
    grid-column: 1 / -1;
  }
  .legend {
    display: flex;
    align-items: center;
    gap: 2px;
    line-height: 16px;
    white-space: nowrap;
  }
  .legend::after {
    content: "";
    flex: 1;
    border-top: 1px solid var(--line);
  }
  .reading {
    margin-top: 11px;
  }
  .note {
    grid-column: 2;
    padding-left: 2px;
  }
  .fields button, .actions button {
    border: 1px solid var(--line);
    background: var(--bar);
  }
  .default {
    grid-column: 2;
    justify-self: end;
    width: 96px;
    height: 23px;
  }
  .example {
    grid-template-columns: 142px 192px 16px 56px 1fr;
    grid-template-rows: 18px;
    row-gap: 5px;
    margin-top: 1px;
  }
  .read {
    grid-column: 4;
    align-self: center;
    height: 23px;
  }
  dl {
    display: grid;
    grid-template-columns: 144px 1fr;
    gap: 11px 0;
    margin: 11px 0 0;
  }
  dd {
    margin: 0;
  }
  .actions {
    display: flex;
    align-items: flex-start;
    height: 40px;
    padding-top: 8px;
  }
  .stop {
    display: flex;
    align-items: center;
    gap: 6px;
    margin-right: auto;
    line-height: 20px;
  }
  .stop input {
    width: 13px;
    height: 13px;
    border: 1px solid #222;
    background: #fff;
    appearance: none;
  }
  .actions button {
    display: flex;
    align-items: center;
    height: 25px;
    margin-left: 5px;
    padding: 0 4px;
  }
  .actions button span {
    flex: 1;
    text-align: center;
  }
  .save {
    width: 75px;
  }
  .save-add {
    width: 107px;
  }
  .cancel {
    width: 72px;
  }
  .dialog-foot {
    height: 24px;
    background: var(--bar);
  }
</style>
